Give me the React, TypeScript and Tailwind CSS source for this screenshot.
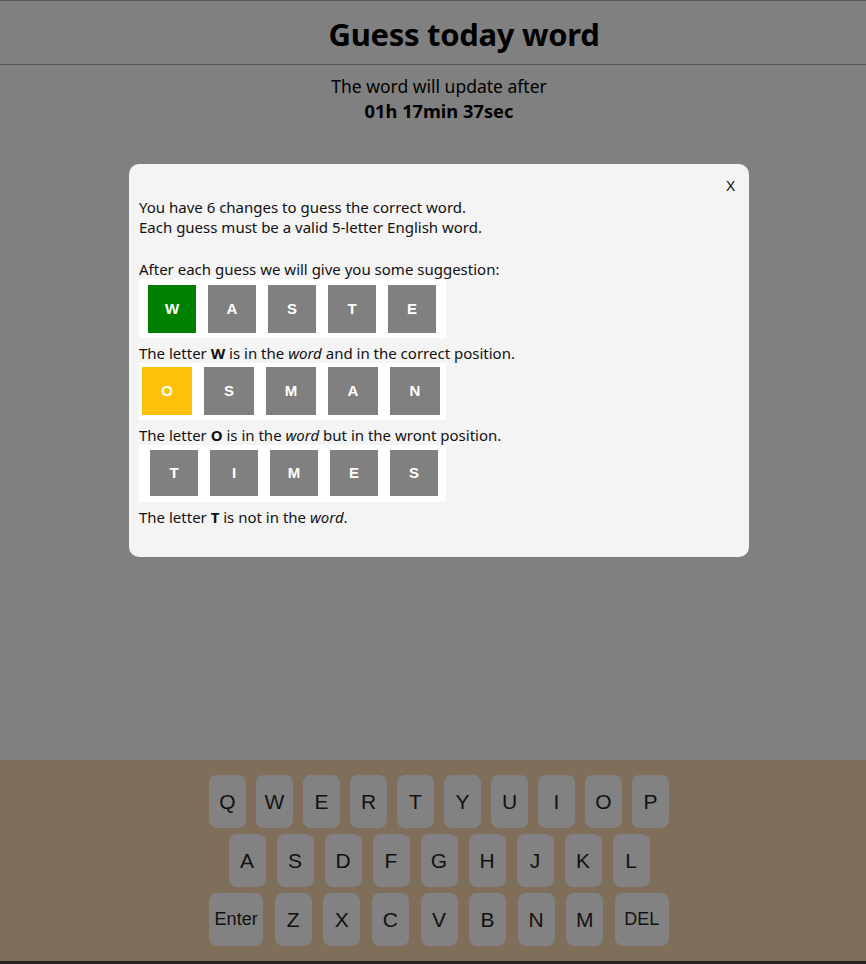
import React from "react";

type TileRowProps = {
  letters: string[];
  colors: string[];
  size: string;
  pad: string;
  gap: string;
};

function TileRow({ letters, colors, size, pad, gap }: TileRowProps) {
  return (
    <div className={`flex w-[307px] bg-white ${pad} ${gap}`}>
      {letters.map((l, i) => (
        <div
          key={i}
          className={`${size} ${colors[i]} flex items-center justify-center text-white font-bold text-[15px] font-['Liberation_Sans',Arial,sans-serif]`}
        >
          {l}
        </div>
      ))}
    </div>
  );
}

function Key({ label, wide }: { label: string; wide?: boolean }) {
  return (
    <div
      className={`${wide ? "w-[54px] text-[18px]" : "w-[37px] text-[21px]"} h-[53px] rounded-[8px] bg-[#828282] flex items-center justify-center text-[#111]`}
    >
      {label}
    </div>
  );
}

export default function App() {
  const row1 = ["Q", "W", "E", "R", "T", "Y", "U", "I", "O", "P"];
  const row2 = ["A", "S", "D", "F", "G", "H", "J", "K", "L"];
  const row3 = ["Z", "X", "C", "V", "B", "N", "M"];
  const font = "font-['Noto_Sans','Open_Sans',sans-serif]";
  return (
    <div className={`w-[866px] h-[964px] bg-[#808080] flex flex-col ${font} overflow-hidden`}>
      <div className="border-t border-[#5c5c5c] h-[65px] border-b border-b-[#555] flex items-center justify-center pl-[62px] pt-[4px]">
        <h1 className="text-[31px] font-bold text-black tracking-[-0.3px]">Guess today word</h1>
      </div>
      <div className="flex flex-col items-center pl-[12px] mt-[9px] text-black">
        <div className="text-[17.5px] leading-[24px]">The word will update after</div>
        <div className="text-[18.3px] leading-[25px] font-bold">01h 17min 37sec</div>
      </div>
      <div className="flex justify-center pl-[12px] mt-[41px]">
        <div className="w-[620px] h-[393px] bg-[#f4f4f4] rounded-[10px] px-[10px] pt-[10px] text-[15px] leading-[20px] text-[#111]">
          <div className="flex justify-end h-[23px] pr-[4px]">
            <span className="text-[15px] leading-[23px]">X</span>
          </div>
          <div>You have 6 changes to guess the correct word.</div>
          <div>Each guess must be a valid 5-letter English word.</div>
          <div className="mt-[22px]">After each guess we will give you some suggestion:</div>
          <TileRow
            letters={["W", "A", "S", "T", "E"]}
            colors={["bg-[#008000]", "bg-[#808080]", "bg-[#808080]", "bg-[#808080]", "bg-[#808080]"]}
            size="w-[48px] h-[48px]"
            pad="pl-[9px] pt-[6px] pb-[5px]"
            gap="gap-[12px]"
          />
          <div className="mt-[5px]">
            The letter <b>W</b> is in the <i>word</i> and in the correct position.
          </div>
          <TileRow
            letters={["O", "S", "M", "A", "N"]}
            colors={["bg-[#ffc107]", "bg-[#808080]", "bg-[#808080]", "bg-[#808080]", "bg-[#808080]"]}
            size="w-[50px] h-[48px]"
            pad="pl-[3px] pt-[4px] pb-[5px]"
            gap="gap-[12px]"
          />
          <div className="mt-[5px]">
            The letter <b>O</b> is in the <i>word</i> but in the wront position.
          </div>
          <TileRow
            letters={["T", "I", "M", "E", "S"]}
            colors={["bg-[#808080]", "bg-[#808080]", "bg-[#808080]", "bg-[#808080]", "bg-[#808080]"]}
            size="w-[48px] h-[46px]"
            pad="pl-[11px] pt-[5px] pb-[6px]"
            gap="gap-[12px]"
          />
          <div className="mt-[5px]">
            The letter <b>T</b> is not in the <i>word</i>.
          </div>
        </div>
      </div>
      <div className="flex-1" />
      <div className="h-[201px] bg-[#7f6f5a] flex flex-col items-center pt-[15px] gap-[6px] pl-[12px] font-['Liberation_Sans',Arial,sans-serif]">
        <div className="flex gap-[10px]">
          {row1.map((k) => (
            <Key key={k} label={k} />
          ))}
        </div>
        <div className="flex gap-[11px]">
          {row2.map((k) => (
            <Key key={k} label={k} />
          ))}
        </div>
        <div className="flex gap-[11.6px]">
          <Key label="Enter" wide />
          {row3.map((k) => (
            <Key key={k} label={k} />
          ))}
          <Key label="DEL" wide />
        </div>
      </div>
      <div className="h-[3px] bg-[#222]" />
    </div>
  );
}
